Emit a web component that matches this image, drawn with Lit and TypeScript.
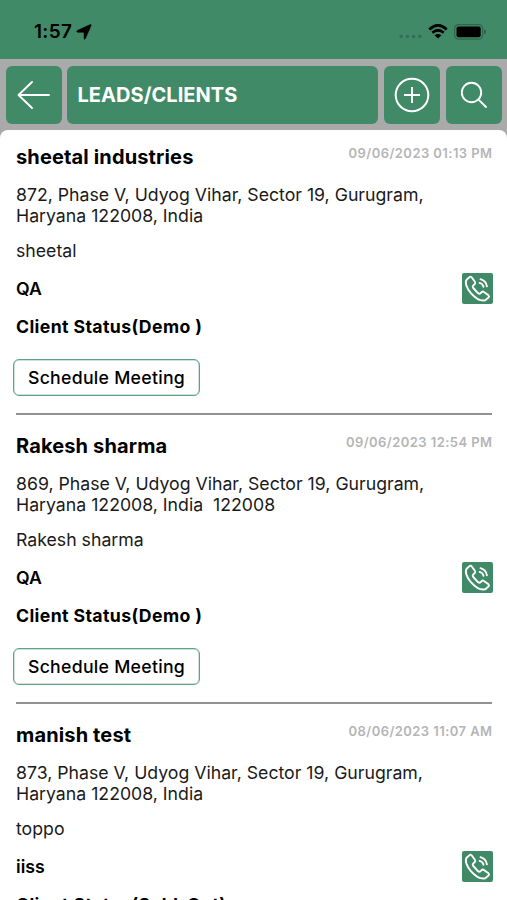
import { LitElement, html, css, svg } from "lit";
import { customElement, property } from "lit/decorators.js";

interface Lead {
  name: string;
  time: string;
  address: string[];
  contact: string;
  product: string;
  status: string;
}

const LEADS: Lead[] = [
  {
    name: "sheetal industries",
    time: "09/06/2023 01:13 PM",
    address: ["872, Phase V, Udyog Vihar, Sector 19, Gurugram,", "Haryana 122008, India"],
    contact: "sheetal",
    product: "QA",
    status: "Client Status(Demo )",
  },
  {
    name: "Rakesh sharma",
    time: "09/06/2023 12:54 PM",
    address: ["869, Phase V, Udyog Vihar, Sector 19, Gurugram,", "Haryana 122008, India  122008"],
    contact: "Rakesh sharma",
    product: "QA",
    status: "Client Status(Demo )",
  },
  {
    name: "manish test",
    time: "08/06/2023 11:07 AM",
    address: ["873, Phase V, Udyog Vihar, Sector 19, Gurugram,", "Haryana 122008, India"],
    contact: "toppo",
    product: "iiss",
    status: "Client Status(Sold-Out)",
  },
];

@customElement("status-bar")
export class StatusBar extends LitElement {
  static styles = css`
    :host { display: flex; align-items: center; height: 59px; padding: 4px 21px 0 34px; box-sizing: border-box; background: #418a68; color: #000; }
    .time { font-size: 19px; font-weight: 600; letter-spacing: 0.3px; line-height: 24px; }
    .arrow { margin-left: 4px; }
    .right { margin-left: auto; display: flex; align-items: center; }
    svg { display: block; }
    .wifi { margin: 0 6px 0 6px; }
    .dots { margin-top: 9px; }
  `;
  render() {
    return html`
      <span class="time">1:57</span>
      <svg class="arrow" width="16" height="16" viewBox="0 0 16 16"><path d="M14.2.6Q15.5.3 15.1 1.5L9.5 14.6Q8.7 16 8 14.6V8.3H1.5Q0 7.8 1.2 6.6Z" stroke="#000" stroke-width=".5" /></svg>
      <div class="right">
        <svg class="dots" width="23" height="5" viewBox="0 0 23 5" fill="#326f53">
          ${[2.2, 8.4, 14.6, 20.8].map((x) => svg`<circle cx=${x} cy="2.5" r="1.8" />`)}
        </svg>
        <svg class="wifi" width="20" height="15" viewBox="0 0 20 15">
          <path d="M1.3 5.4Q10-2.6 18.7 5.4M4.3 8.7Q10 3.8 15.7 8.7" fill="none" stroke="#000" stroke-width="2.7" />
          <path d="M6.6 11.2Q10 8.6 13.4 11.2L10 14.6Z" />
        </svg>
        <svg width="32" height="16" viewBox="0 0 32 16">
          <rect x=".6" y=".6" width="28" height="14.6" rx="4" fill="none" stroke="#2d674c" stroke-width="1.2" />
          <rect x="2.5" y="2.5" width="24.2" height="10.8" rx="2" />
          <path d="M30.2 5.2q3.2 2.7 0 5.4z" fill="#26543e" />
        </svg>
      </div>
    `;
  }
}

@customElement("title-bar")
export class TitleBar extends LitElement {
  static styles = css`
    :host { display: grid; grid-template-columns: 56px 1fr 56px 56px; column-gap: 6px; height: 71px; padding: 6.5px 5px 6px 6px; box-sizing: border-box; background: #aaa; }
    .tile { display: flex; align-items: center; justify-content: center; border-radius: 6px; background: #418a68; color: #fff; }
    .title { justify-content: flex-start; margin: 0 0 0 -1px; padding-left: 10.5px; font-size: 20px; font-weight: 700; letter-spacing: 0.05px; }
    svg { display: block; fill: none; stroke: #fff; }
  `;
  render() {
    return html`
      <div class="tile">
        <svg width="34" height="30" viewBox="0 0 34 30" stroke-width="1.9" stroke-linecap="round" stroke-linejoin="round"><path d="M32 15H1.5M15 2 1.5 15 15 28" /></svg>
      </div>
      <h1 class="tile title">LEADS/CLIENTS</h1>
      <div class="tile">
        <svg width="36" height="36" viewBox="0 0 36 36" stroke-width="2"><circle cx="18" cy="18" r="16.3" /><path d="M10 18H26M18 10V26" /></svg>
      </div>
      <div class="tile">
        <svg width="28" height="28" viewBox="0 0 28 28" stroke-width="1.9" stroke-linecap="round"><circle cx="11.5" cy="11.5" r="9.7" /><path d="M18.6 18.6 26 26" /></svg>
      </div>
    `;
  }
}

@customElement("lead-item")
export class LeadItem extends LitElement {
  @property({ attribute: false }) lead!: Lead;

  static styles = css`
    :host { display: flex; flex-direction: column; height: 289px; padding: 14px 14.5px 0 16px; box-sizing: border-box; color: #1a1a1a; }
    .head { display: flex; justify-content: space-between; align-items: flex-start; height: 40px; flex: none; }
    .name { margin: 0; font-size: 20px; line-height: 26px; font-weight: 700; letter-spacing: 0.14px; color: #000; }
    .date { font-size: 13px; line-height: 18px; font-weight: 600; letter-spacing: 0.44px; color: #b5b5b5; white-space: nowrap; }
    .text { margin: 0; flex: none; font-size: 17.7px; line-height: 21px; white-space: pre; }
    .contact { margin-top: 14px; }
    .row { display: flex; flex: none; justify-content: space-between; align-items: center; height: 32px; margin-top: 11px; }
    .strong { font-weight: 600; color: #000; }
    .status { margin-top: 12px; font-weight: 700; letter-spacing: 0.37px; }
    .call { display: block; }
    .meeting { align-self: flex-start; display: flex; flex: none; align-items: center; justify-content: center; width: 187px; height: 37px; margin: 22px 0 0 -3px; padding: 0; box-sizing: border-box; border: 1px solid #5fa386; box-shadow: inset 0 0 0 0.5px #9cc8b4; border-radius: 6px; background: #fff; font: 500 17.7px Inter, sans-serif; letter-spacing: 0.27px; color: #000; white-space: nowrap; }
    .line { flex: none; height: 2px; margin: 17px 0.5px 0 0; background: #929292; }
  `;
  render() {
    const l = this.lead;
    return html`
      <div class="head"><h2 class="name">${l.name}</h2><span class="date">${l.time}</span></div>
      ${l.address.map((a) => html`<p class="text">${a}</p>`)}
      <p class="text contact">${l.contact}</p>
      <div class="row">
        <span class="text strong">${l.product}</span>
        <svg class="call" width="31" height="31" viewBox="0 0 31 31" fill="none" stroke="#fff" stroke-width="1.9" stroke-linecap="round" stroke-linejoin="round">
          <rect width="31" height="31" rx="2" fill="#418a68" stroke="none" />
          <path d="M7.5 4.1 4.6 6.8C.5 12.5 13.5 29 23 27.4L26.5 24.6Q27.6 23.4 26.5 22.3L21.9 18.9Q20.8 18 19.8 19L18.4 20.4Q17.4 21.3 15.9 20.1L11.3 15Q10.2 13.8 11.1 12.7L12.8 11Q13.7 10 12.9 8.8L9.6 4.3Q8.5 3.1 7.5 4.1Z" />
          <path d="M18.5 6.2Q24 7.8 24.9 13.3M17.6 9.9Q20.8 10.7 21.5 13.7" />
        </svg>
      </div>
      <p class="text strong status">${l.status}</p>
      <button class="meeting">Schedule Meeting</button>
      <div class="line"></div>
    `;
  }
}

@customElement("app-root")
export class AppRoot extends LitElement {
  static styles = css`
    :host { display: flex; flex-direction: column; height: 900px; overflow: hidden; background: #aaa; font-family: Inter, sans-serif; }
    status-bar, title-bar { flex: none; }
    .list { flex: 1; min-height: 0; overflow: hidden; background: #fff; border-radius: 8px 8px 0 0; }
  `;
  render() {
    return html`
      <status-bar></status-bar>
      <title-bar></title-bar>
      <main class="list">${LEADS.map((l) => html`<lead-item .lead=${l}></lead-item>`)}</main>
    `;
  }
}
